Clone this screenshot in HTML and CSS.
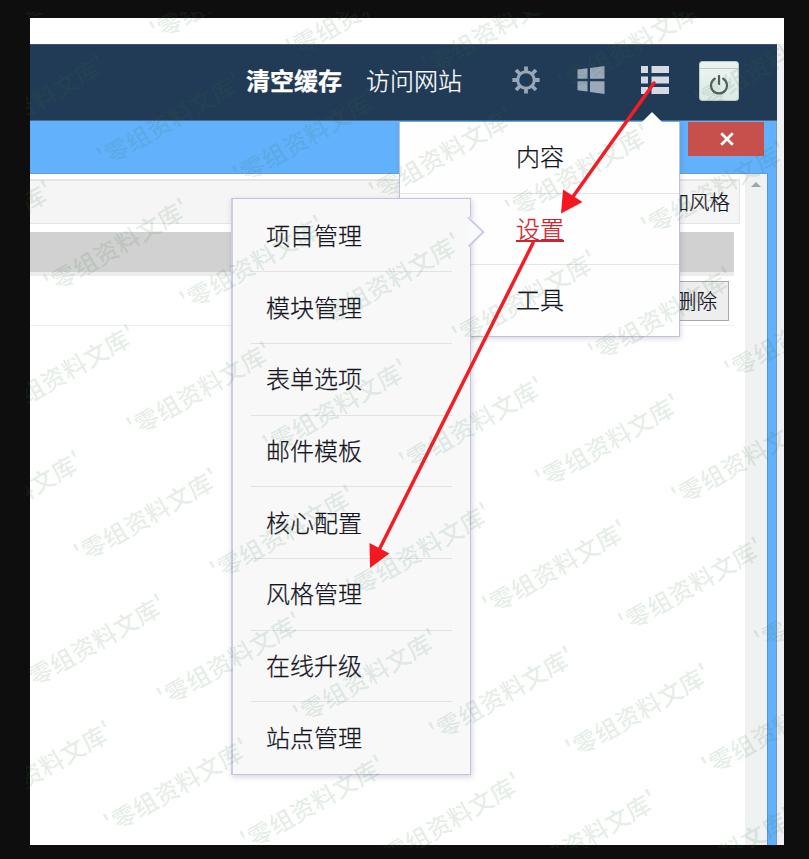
FILE: index.html
```
<!DOCTYPE html>
<html lang="zh-CN">
<head>
<meta charset="utf-8">
<title>风格管理</title>
<link rel="stylesheet" href="styles.css">
</head>
<body>
<main class="screen">
  <header class="topbar">
    <a class="top-link strong">清空缓存</a>
    <a class="top-link">访问网站</a>
    <svg class="icon gear" viewBox="0 0 28 28">
      <circle cx="14" cy="14" r="8.300" fill="none" stroke="#97a7b9" stroke-width="3"/>
      <g stroke="#97a7b9" stroke-width="3.8">
        <path d="M14 .4v5M14 22.6v5M.4 14h5M22.6 14h5M4 4l4 4M20 20l4 4M4 24l4-4M20 8l4-4"/>
      </g>
    </svg>
    <svg class="icon windows" viewBox="0 0 28 28" fill="#9aa9b9">
      <path d="M.5 3.500L10.500 2.300v10.500H.5zM13 2L27.500 0v12.800H13zM.5 15.200h10v10.300L.5 24.300zM13 15.200h14.500V28L13 26z"/>
    </svg>
    <svg class="icon list" viewBox="0 0 28 28" fill="#d5dbe6">
      <path d="M0 0h7v7H0zM10.500 0H28v7H10.500zM0 10.500h7v7H0zM10.500 10.500H28v7H10.500zM0 21h7v7H0zM10.500 21H28v7H10.500z"/>
    </svg>
    <span class="power">
      <svg viewBox="0 0 20 20" fill="none" stroke="#50605c" stroke-width="2.200" stroke-linecap="round">
        <path d="M5.700 3.700a8 8 0 1 0 8.600 0M10 1v8"/>
      </svg>
    </span>
  </header>
  <section class="window">
    <div class="titlebar">
      <span class="close"><svg viewBox="0 0 14 14"><path d="M1.200 1.200l11.600 11.600M12.800 1.200L1.200 12.800" stroke="#fff" stroke-width="2.700"/></svg></span>
    </div>
    <div class="pane">
      <div class="content">
        <div class="toolbar">添加风格</div>
        <div class="table-head"></div>
        <div class="table-row"><span class="button">删除</span></div>
      </div>
      <div class="scrollbar"><i class="up"></i></div>
    </div>
  </section>
</main>

<nav class="menu">
  <svg class="menu-tip" viewBox="0 0 20 10"><path d="M0 10L9.500 .5Q10 0 10.500 .5L20 10z" fill="#fff"/></svg>
  <a>内容</a>
  <a class="active">设置</a>
  <a>工具</a>
</nav>

<nav class="submenu">
  <a>项目管理</a>
  <a>模块管理</a>
  <a>表单选项</a>
  <a>邮件模板</a>
  <a>核心配置</a>
  <a>风格管理</a>
  <a>在线升级</a>
  <a>站点管理</a>
  <svg class="submenu-tip" viewBox="0 0 18 32"><path d="M0 1L3 1L16.500 16L3 30L0 30z" fill="#f8f9fd"/><path d="M1 1l2.500 3L16.500 16L1.500 30.500" fill="none" stroke="#c9cae2" stroke-width="1.800"/></svg>
</nav>

<svg class="arrows" viewBox="0 0 809 859">
  <g stroke="#f51d25" stroke-width="3.500" stroke-linecap="round">
    <path d="M654 83L572 198M533 243L380 548"/>
  </g>
  <path fill="#f51820" d="M563 189.500L582.500 202L561 213.500zM369.500 543L389.500 553.500L370 568z"/>
</svg>
<svg class="watermark" viewBox="26 12 758 836" id="watermark"></svg>
<script src="watermark.js"></script>
</body>
</html>
```
FILE: watermark.js
```
const layer = document.getElementById('watermark');
for (let row = -6; row <= 5; row++) {
  for (let col = -4; col <= 8; col++) {
    const x = 134.5 + col * 136.1 + row * 53;
    const y = 438 + col * 17.3 - row * 126.3;
    if (x < -110 || x > 782 || y < 14 || y > 922) continue;
    const text = document.createElementNS('http://www.w3.org/2000/svg', 'text');
    text.setAttribute('transform', `translate(${x} ${y}) rotate(-29.8)`);
    text.textContent = "'零组资料文库'";
    layer.appendChild(text);
  }
}
```
FILE: styles.css
```
* { box-sizing: border-box; }

body {
  margin: 0;
  width: 809px;
  height: 859px;
  padding: 18px 25px 14px 30px;
  overflow: hidden;
  position: relative;
  background: #0e0e0e;
  font-family: "Noto Sans CJK SC", sans-serif;
  font-weight: 300;
  color: #15151f;
}

.screen {
  height: 827px;
  padding: 26px 7px 0 0;
  background: linear-gradient(#fff 0 26px, #f0eff2 26px);
  display: flex;
  flex-direction: column;
}

.topbar {
  flex: 0 0 77px;
  display: flex;
  align-items: center;
  padding: 0 38px 4px 0;
  justify-content: flex-end;
  background: #213a56;
  border-top: 1px solid #4a5168;
  border-bottom: 1px solid #496c90;
}
.top-link {
  color: #fff;
  font-size: 24px;
  line-height: 36px;
  margin: -2px 24px 0 0;
  -webkit-text-stroke: .25px;
}
.strong { font-weight: 700; }
.icon { width: 28px; height: 28px; }
.gear { margin: -2px 37px 0 26px; }
.windows { margin: -2px 36px 0 0; }
.list { margin: -2px 30px 0 0; }
.power {
  width: 40px;
  height: 40px;
  border-radius: 3px;
  background: linear-gradient(#e9f2ef 0 6px, #bccbc9 6px 7px, #eaf3f0 7px, #dce9e6);
  border: 1px solid #b8c8cb;
  display: flex;
  justify-content: center;
  padding-top: 13px;
}
.power svg { width: 20px; height: 20px; }

.window {
  flex: 1;
  background: #61b1fd;
  border-right: 1px solid #7598c8;
  display: flex;
  flex-direction: column;
  padding-right: 8px;
}
.titlebar {
  flex: 0 0 52px;
  display: flex;
  justify-content: flex-end;
  padding: 1px 4px 0 0;
}
.close {
  width: 76px;
  height: 34px;
  background: #c74f4c;
  display: flex;
  align-items: center;
  justify-content: center;
  padding-left: 2px;
}
.close svg { width: 14px; height: 14px; }
.pane {
  flex: 1;
  display: flex;
  background: #fff;
  border-top: 1px solid #6e9bd3;
  border-right: 1px solid #5c91ca;
}
.content { flex: 1; padding: 5px 5px 0 0; }
.toolbar {
  height: 45px;
  border: 1px solid #e5e5e5;
  border-width: 2px 1px 1px 0;
  background: #f5f5f5;
  font-size: 20.500px;
  line-height: 40px;
  text-align: right;
  padding-right: 9px;
  -webkit-text-stroke: .25px;
}
.table-head {
  height: 44px;
  margin: 8px 6px 0 0;
  background: linear-gradient(#d1d1d1 0 40px, #ececec 40px);
}
.table-row {
  height: 50px;
  margin-right: 6px;
  padding: 5px 5px 0 0;
  border-bottom: 1px solid #efeff1;
  display: flex;
  justify-content: flex-end;
}
.button {
  height: 40px;
  width: 62px;
  border: 1px solid #a9a9ac;
  background: #eee;
  text-align: right;
  padding-right: 11px;
  font-size: 20.500px;
  line-height: 37px;
  -webkit-text-stroke: .25px;
}
.scrollbar {
  flex: 0 0 22px;
  background: #f0f1f1;
  display: flex;
  justify-content: center;
  padding-top: 8px;
}
.up {
  width: 0;
  height: 0;
  border: 5px solid transparent;
  border-top: 0;
  border-bottom-color: #a5a5a8;
}

.menu {
  position: absolute;
  left: 399px;
  top: 122px;
  width: 281px;
  height: 215px;
  background: #fefefe;
  border: 1px solid #bfc1db;
  border-top: 0;
  box-shadow: 1px 2px 5px rgba(60, 60, 90, .18);
  display: flex;
  flex-direction: column;
}
.menu a {
  flex: 1;
  padding: 0 0 4px 116px;
  display: flex;
  align-items: center;
  font-size: 24px;
  border-bottom: 1px solid #e3e4eb;
  -webkit-text-stroke: .25px;
}
.menu a:last-of-type { border-bottom: 0; }
.menu .active { color: #c7252f; text-decoration: underline; text-decoration-thickness: 2px; text-underline-offset: 2px; }
.menu-tip {
  position: absolute;
  left: 242px;
  top: -10px;
  width: 20px;
  height: 10px;
}

.submenu {
  position: absolute;
  left: 231px;
  top: 198px;
  width: 240px;
  height: 577px;
  padding: 1.500px 18px 0;
  background: #f8f8f9;
  border: 1px solid #c3c2df;
  border-left: 2px solid #cdcce5;
  box-shadow: 1px 2px 6px rgba(50, 50, 80, .2);
  display: flex;
  flex-direction: column;
}
.submenu a {
  flex: 0 0 71.700px;
  padding: 0 0 3px 15px;
  display: flex;
  align-items: center;
  font-size: 24px;
  border-bottom: 1px solid #e2e2e5;
  -webkit-text-stroke: .25px;
}
.submenu a:last-of-type { border-bottom: 0; }
.submenu-tip {
  position: absolute;
  right: -15px;
  top: 17px;
  width: 18px;
  height: 32px;
}

.arrows { position: absolute; left: 0; top: 0; width: 809px; height: 859px; }
.watermark {
  position: absolute;
  left: 26px;
  top: 12px;
  width: 758px;
  height: 836px;
  overflow: hidden;
  font-size: 24px;
  letter-spacing: .4px;
  font-weight: 500;
  fill: rgba(55, 120, 65, .15);
}
```
